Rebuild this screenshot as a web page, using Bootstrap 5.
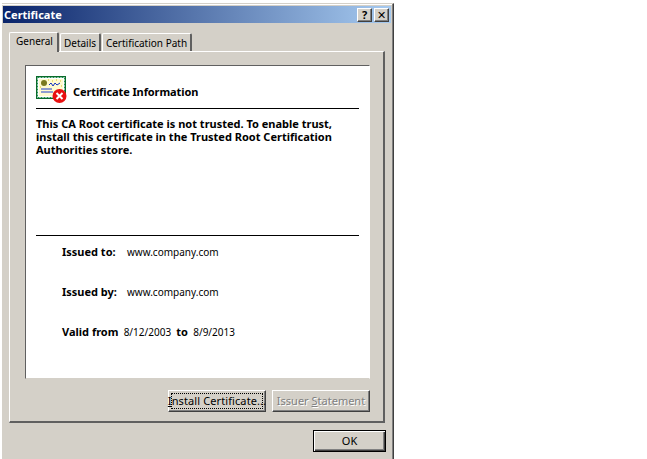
<!DOCTYPE html>
<html lang="en"><head><meta charset="utf-8"><title>Certificate</title>
<link href="https://cdn.jsdelivr.net/npm/bootstrap@5.3.0/dist/css/bootstrap.min.css" rel="stylesheet">
<style>
html,body{background:#fff;margin:0;height:459px;overflow:hidden}
body{font-family:"Noto Sans","DejaVu Sans",sans-serif;font-size:11px;line-height:13px;color:#000;padding:3px 0 0 2px}
.dlg{width:392px;height:456px;background:#d4d0c8;border-top:1px solid #d4d0c8;border-right:1px solid #404040;box-shadow:inset -1px 0 0 #808080,inset 0 1px 0 #fff;padding:2px 2px 0 1px}
.ttl{height:17px;background:linear-gradient(90deg,#0a246a,#a6caf0);color:#fff;font-weight:700;font-size:11px;padding:0 2px 0 1px}
.capbtn{width:15px;height:14px;background:#d4d0c8;border:1px solid;border-color:#fff #404040 #404040 #fff;box-shadow:inset -1px -1px 0 #808080;padding:0;color:#000;font-size:11px;font-weight:700;line-height:11px;display:flex;align-items:center;justify-content:center}
.capgap{gap:2px}
.tabrow{margin:8px 0 0 6px;height:20px;align-items:flex-end}
.tb{background:#d4d0c8;height:18px;font-size:10px;border:1px solid #fff;border-bottom:0;border-right:2px solid #606060;border-radius:2px 2px 0 0;padding:3px 0 0;text-align:center;color:#000;white-space:nowrap}
.tb-on{height:20px;width:50px;padding:2px 0 0 2px;margin-bottom:-1px;position:relative;z-index:1;border-right-color:#606060}
.tb-a{width:41px;margin-left:1px}.tb-b{width:90px;margin-left:1px}
.pane{margin-left:6px;width:376px;height:372px;border:1px solid #fff;border-right:2px solid #606060;border-bottom:2px solid #606060;padding:13px 14px 0 15px}
.wbox{width:345px;height:314px;background:#fff;border:1px solid;border-color:#606060 #fff #d4d0c8 #606060;padding:0 10px}
.hd{height:43px;border-bottom:1px solid #000;gap:6px;padding:10px 0 0;font-weight:700;align-items:flex-start}
.hd span{margin-top:9px;letter-spacing:-.1px}
.msg{height:127px;border-bottom:1px solid #000;padding-top:8px;font-weight:700;margin:0;white-space:nowrap}
.inf{padding:9px 0 0 26px;height:40px;margin:0;white-space:nowrap;font-size:10px}
.inf b{font-weight:700;font-size:11px}
.w1{width:65px;display:inline-block}
.wbtn{height:22px;width:98px;background:#d4d0c8;border:1px solid;border-color:#fff #404040 #404040 #fff;box-shadow:inset -1px -1px 0 #808080;padding:0 0 2px;color:#000;font-size:11px;line-height:13px;display:flex;align-items:center;justify-content:center;white-space:nowrap}
.focusd{outline:1px dotted #000;outline-offset:-4px;letter-spacing:.1px}
.dis{color:#808080;text-shadow:1px 1px 0 #fff}
.btnrow{gap:6px;margin:11px 0 0;justify-content:flex-end;width:345px}
.okrow{justify-content:flex-end;margin-top:7px;padding-right:5px}
.okb{width:73px;height:22px;border:1px solid #000;box-shadow:inset 1px 1px 0 #fff,inset -1px -1px 0 #404040,inset -2px -2px 0 #808080}
</style></head><body>
<div class="dlg">
 <div class="ttl d-flex align-items-center justify-content-between"><span>Certificate</span>
  <div class="d-flex capgap"><button class="capbtn">?</button><button class="capbtn">✕</button></div></div>
 <div class="tabrow d-flex">
  <div class="tb tb-on">General</div><div class="tb tb-a">Details</div><div class="tb tb-b">Certification Path</div>
 </div>
 <div class="pane">
  <div class="wbox">
   <div class="hd d-flex">
    <svg width="31" height="27" viewBox="0 0 31 27">
     <rect x="0.5" y="0.5" width="29" height="22" fill="#fff" stroke="#0a6a2a"/>
     <rect x="1.5" y="1.5" width="27" height="20" fill="none" stroke="#1f8f4f" stroke-dasharray="2 1"/>
     <rect x="3" y="3" width="24" height="17" fill="#fffbd0"/>
     <path d="M12 4h1M16 5h1M20 4h1M24 5h1M4 11h1M25 10h1" stroke="#d8c020"/>
     <circle cx="8" cy="7" r="3" fill="#7a7a20"/>
     <path d="M13 9l2-2 2 3 2-3 2 2 3-2" fill="none" stroke="#1030c0"/>
     <path d="M5 13h11M5 16h12" stroke="#2040d0"/>
     <circle cx="23.5" cy="20" r="7" fill="#e81010"/>
     <path d="M20.5 17l6 6M26.5 17l-6 6" stroke="#fff" stroke-width="2"/>
    </svg>
    <span>Certificate Information</span>
   </div>
   <p class="msg">This CA Root certificate is not trusted. To enable trust,<br>install this certificate in the Trusted Root Certification<br>Authorities store.</p>
   <p class="inf"><b class="w1">Issued to:</b>www.company.com</p>
   <p class="inf"><b class="w1">Issued by:</b>www.company.com</p>
   <p class="inf"><b>Valid from</b>&nbsp; 8/12/2003 &nbsp;<b>to</b>&nbsp; 8/9/2013</p>
  </div>
  <div class="btnrow d-flex">
   <button class="wbtn focusd"><span><u>I</u>nstall Certificate...</span></button>
   <button class="wbtn dis"><span>Issuer <u>S</u>tatement</span></button>
  </div>
 </div>
 <div class="okrow d-flex"><button class="wbtn okb">OK</button></div>
</div>
</body></html>
